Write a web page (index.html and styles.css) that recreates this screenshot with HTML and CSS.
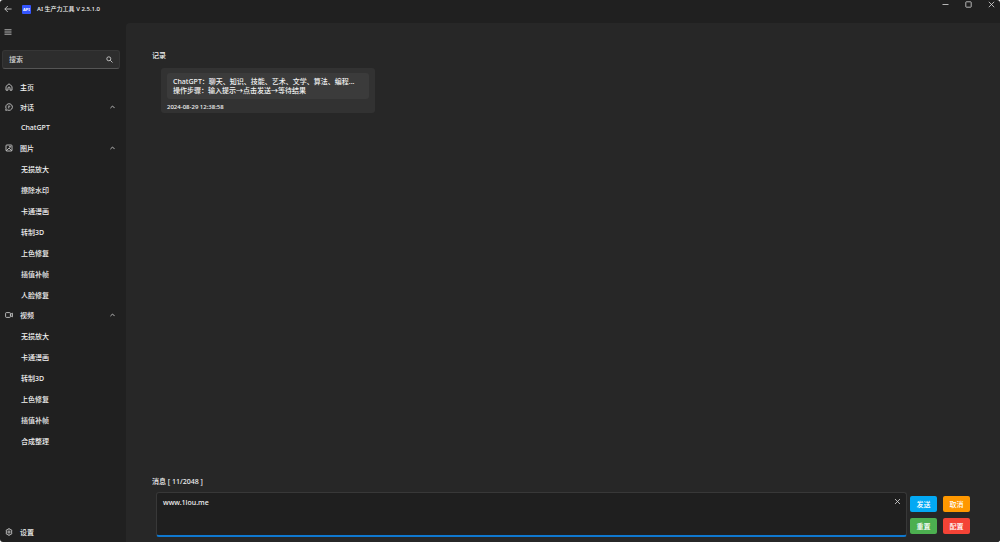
FILE: index.html
```html
<!DOCTYPE html>
<html lang="zh-CN">

<head>
    <meta charset="UTF-8">
    <meta name="viewport" content="width=device-width, initial-scale=1.0">
    <title>AI 生产力工具</title>
    <link rel="stylesheet" href="styles.css">
</head>

<body>
    <div class="window">
        <header class="titlebar">
            <button class="back" aria-label="返回">
                <svg width="8" height="8" viewBox="0 0 8 8"><path d="M7.6 4H.8M3.8 1L.8 4l3 3" /></svg>
            </button>
            <svg class="logo" width="9" height="9" viewBox="0 0 9 9">
                <rect width="9" height="9" rx="1" />
                <text x="4.5" y="6" text-anchor="middle">API</text>
            </svg>
            <h1>AI 生产力工具 V 2.5.1.0</h1>
            <div class="controls">
                <button aria-label="最小化"><svg width="7" height="7" viewBox="0 0 7 7"><path d="M.5 3.5h6" /></svg></button>
                <button aria-label="最大化"><svg width="7" height="7" viewBox="0 0 7 7"><rect x=".8" y=".8" width="5.4" height="5.4" rx=".6" /></svg></button>
                <button aria-label="关闭"><svg width="7" height="7" viewBox="0 0 7 7"><path d="M.8 .8l5.4 5.4M6.2 .8L.8 6.2" /></svg></button>
            </div>
        </header>

        <div class="layout">
            <aside class="sidebar">
                <button class="menu" aria-label="菜单">
                    <svg width="8" height="6" viewBox="0 0 8 6"><path d="M.5 .8h7M.5 3h7M.5 5.2h7" /></svg>
                </button>
                <div class="search">
                    <input type="text" placeholder="搜索" aria-label="搜索">
                    <svg width="7" height="7" viewBox="0 0 7 7"><circle cx="2.8" cy="2.8" r="2" /><path d="M4.3 4.3l2.2 2.2" /></svg>
                </div>

                <nav>
                    <a class="item" href="#">
                        <svg width="8" height="8" viewBox="0 0 8 8"><path d="M1 3.4L4 .8l3 2.6v3.8H5V5a1 1 0 0 0-2 0v2.2H1z" /></svg>
                        <span>主页</span>
                    </a>

                    <a class="item" href="#">
                        <svg width="8" height="8" viewBox="0 0 8 8"><path d="M.7 7.3l.4-1.8A3.3 3.3 0 1 1 2.6 7zM2.9 3.2h2.4M2.9 4.8h1.5" /></svg>
                        <span>对话</span>
                        <svg class="arrow" width="5" height="4" viewBox="0 0 5 4"><path d="M.4 3.1L2.5 1l2.1 2.1" /></svg>
                    </a>
                    <a class="sub" href="#">ChatGPT</a>

                    <a class="item" href="#">
                        <svg width="8" height="8" viewBox="0 0 8 8"><rect x="1" y="1" width="6" height="6" rx=".8" /><path d="M1.3 6.7L4 4.1l2.7 2.6" /><circle cx="5" cy="2.8" r=".6" /></svg>
                        <span>图片</span>
                        <svg class="arrow" width="5" height="4" viewBox="0 0 5 4"><path d="M.4 3.1L2.5 1l2.1 2.1" /></svg>
                    </a>
                    <a class="sub" href="#">无损放大</a>
                    <a class="sub" href="#">擦除水印</a>
                    <a class="sub" href="#">卡通漫画</a>
                    <a class="sub" href="#">转制3D</a>
                    <a class="sub" href="#">上色修复</a>
                    <a class="sub" href="#">插值补帧</a>
                    <a class="sub" href="#">人脸修复</a>

                    <a class="item" href="#">
                        <svg width="8" height="8" viewBox="0 0 8 8"><rect x=".6" y="1.6" width="4.8" height="4.8" rx=".8" /><path d="M5.5 3.4l1.9-1.2v3.6L5.5 4.6" /></svg>
                        <span>视频</span>
                        <svg class="arrow" width="5" height="4" viewBox="0 0 5 4"><path d="M.4 3.1L2.5 1l2.1 2.1" /></svg>
                    </a>
                    <a class="sub" href="#">无损放大</a>
                    <a class="sub" href="#">卡通漫画</a>
                    <a class="sub" href="#">转制3D</a>
                    <a class="sub" href="#">上色修复</a>
                    <a class="sub" href="#">插值补帧</a>
                    <a class="sub" href="#">合成整理</a>
                </nav>

                <a class="item settings" href="#">
                    <svg width="8" height="8" viewBox="0 0 8 8"><path d="M3.2 .8h1.6l.3 1 1.1-.2.8 1.4-.7 1 .7 1-.8 1.4-1.1-.2-.3 1H3.2l-.3-1-1.1.2L1 5l.7-1L1 3l.8-1.4 1.1.2z" /><circle cx="4" cy="4" r="1.1" /></svg>
                    <span>设置</span>
                </a>
            </aside>

            <main class="content">
                <h2>记录</h2>
                <article class="record">
                    <p>ChatGPT：聊天、知识、技能、艺术、文学、算法、编程...<br>操作步骤：输入提示→点击发送→等待结果</p>
                    <time>2024-08-29 12:38:58</time>
                </article>

                <form class="composer">
                    <label for="message">消息 [ 11/2048 ]</label>
                    <div class="row">
                        <div class="field">
                            <textarea id="message">www.1lou.me</textarea>
                            <button class="clear" type="button" aria-label="清除">
                                <svg width="7" height="7" viewBox="0 0 7 7"><path d="M1 1l5 5M6 1L1 6" /></svg>
                            </button>
                        </div>
                        <div class="actions">
                            <button class="send" type="button">发送</button>
                            <button class="cancel" type="button">取消</button>
                            <button class="reset" type="button">重置</button>
                            <button class="config" type="button">配置</button>
                        </div>
                    </div>
                </form>
            </main>
        </div>
    </div>
</body>

</html>
```
FILE: styles.css
```css
* {
    box-sizing: border-box;
    margin: 0;
    padding: 0;
}

html {
    background-color: white;
}

body,
button,
input,
textarea {
    font-family: "Noto Sans", "Noto Sans CJK SC", sans-serif;
    font-size: 7px;
    font-weight: 500;
    color: #f2f2f2;
}

button {
    border: none;
    background: none;
    cursor: pointer;
}

a {
    color: inherit;
    text-decoration: none;
}

svg {
    display: block;
    flex: none;
    fill: none;
    stroke: #dcdcdc;
    stroke-width: 0.8;
}

h1,
h2 {
    font-size: 7px;
    font-weight: 500;
    line-height: 12px;
}

h1 {
    font-size: 6px;
}

.window {
    display: flex;
    flex-direction: column;
    min-height: 100vh;
    border-radius: 3px;
    background-color: #202020;
    overflow: hidden;
}

/* title bar */
.titlebar {
    display: flex;
    align-items: center;
    height: 23px;
    padding: 0 5px 5px 4px;
}

.logo {
    margin: 0 6px 0 10px;
}

.logo rect {
    fill: #3355ff;
    stroke: none;
}

.logo text {
    fill: white;
    stroke: none;
    font-size: 4px;
    font-weight: 700;
}

.controls {
    display: flex;
    align-self: flex-start;
    gap: 16px;
    margin-left: auto;
    padding-top: 1px;
}

/* sidebar */
.layout {
    display: flex;
    flex: 1;
}

.sidebar {
    display: flex;
    flex-direction: column;
    width: 126px;
}

.menu {
    align-self: flex-start;
    padding: 6px 4px 7px;
}

.search {
    display: flex;
    align-items: center;
    height: 19px;
    margin: 8px 6px 8px 2px;
    padding: 0 6px;
    border: 1px solid #363636;
    border-bottom-color: #555;
    border-radius: 3px;
    background-color: #2d2d2d;
}

.search input {
    flex: 1;
    min-width: 0;
    border: none;
    outline: none;
    background: none;
}

.search input::placeholder {
    color: #d0d0d0;
}

.item,
.sub {
    display: flex;
    align-items: center;
}

.item {
    height: 20px;
    padding: 0 11px 0 5px;
    gap: 7px;
}

.sub {
    height: 21px;
    padding-left: 21px;
}

.arrow {
    margin-left: auto;
}

.settings {
    margin-top: auto;
}

/* content */
.content {
    display: flex;
    flex: 1;
    flex-direction: column;
    align-items: flex-start;
    padding: 27px 30px 5px 26px;
    border-radius: 4px 0 0 0;
    background-color: #272727;
}

.record {
    min-width: 214px;
    margin: 6px 0 0 9px;
    padding: 5px 6px 0;
    border-radius: 3px;
    background-color: #323232;
}

.record p {
    padding: 4px 6px;
    border-radius: 3px;
    background-color: #3b3b3b;
    line-height: 9px;
    white-space: nowrap;
}

.record time {
    display: block;
    padding-top: 3px;
    font-size: 6px;
    line-height: 11px;
}

.composer {
    align-self: stretch;
    margin-top: auto;
}

.composer label {
    display: block;
    margin-bottom: 4px;
    line-height: 12px;
}

.row {
    display: flex;
    align-items: center;
    gap: 3px;
    margin-left: 4px;
}

.field {
    position: relative;
    flex: 1;
}

.field textarea {
    display: block;
    width: 100%;
    height: 45px;
    padding: 4px 20px 4px 6px;
    border: 1px solid #383838;
    border-bottom: 2px solid #0f78cf;
    border-radius: 3px;
    outline: none;
    background-color: #1f1f1f;
    line-height: 12px;
    resize: none;
}

.clear {
    position: absolute;
    top: 6px;
    right: 6px;
}

.actions {
    display: grid;
    grid-template-columns: 27px 27px;
    gap: 6px;
}

.actions button {
    height: 16px;
    border-radius: 2px;
    color: white;
}

.send {
    background-color: #03a9f4;
}

.cancel {
    background-color: #ff9800;
}

.reset {
    background-color: #4caf50;
}

.config {
    background-color: #f44336;
}
```
